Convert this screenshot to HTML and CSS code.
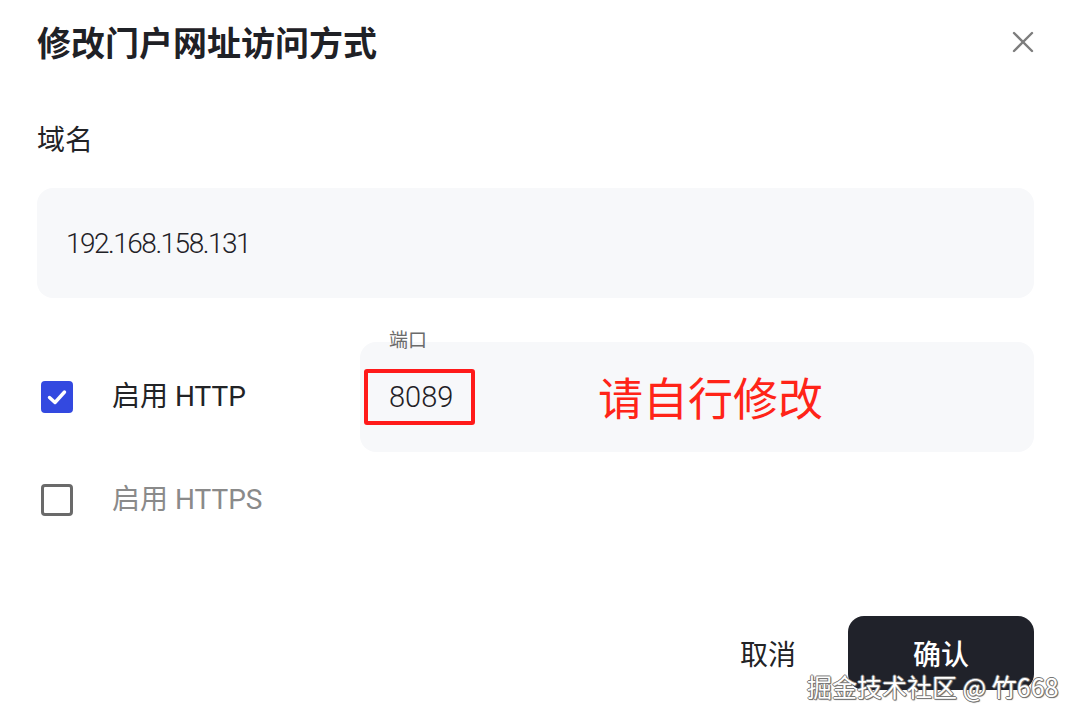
FILE: index.html
```html
<!DOCTYPE html>
<html lang="zh">
<head>
<meta charset="utf-8">
<title>修改门户网址访问方式</title>
<link rel="stylesheet" href="styles.css">
</head>
<body>
<div class="dialog">
  <div class="header">
    <h1 class="title">修改门户网址访问方式</h1>
    <button class="close" aria-label="关闭">
      <svg width="22" height="22" viewBox="0 0 22 22"><path d="M2 2L20 20M20 2L2 20" stroke="#7d7d7d" stroke-width="2.4" stroke-linecap="round"/></svg>
    </button>
  </div>

  <div class="field-label">域名</div>
  <div class="input domain">192.168.158.131</div>

  <div class="row http">
    <div class="check-group">
      <span class="checkbox checked">
        <svg width="24" height="24" viewBox="0 0 24 24"><path d="M4.5 12.5L10 17.5L19.5 7" fill="none" stroke="#fff" stroke-width="3.4" stroke-linecap="round" stroke-linejoin="round"/></svg>
      </span>
      <span class="check-text">启用 HTTP</span>
    </div>
    <div class="port-wrap">
      <span class="port-label">端口</span>
      <div class="input port">
        <span class="port-value">8089</span>
        <span class="note">请自行修改</span>
      </div>
    </div>
  </div>

  <div class="row https">
    <div class="check-group">
      <span class="checkbox"></span>
      <span class="check-text muted">启用 HTTPS</span>
    </div>
  </div>

  <div class="footer">
    <button class="btn-cancel">取消</button>
    <button class="btn-ok">确认</button>
  </div>

  <div class="watermark">掘金技术社区 @ 竹668</div>
</div>
</body>
</html>
```

FILE: styles.css
```css
html, body {
  margin: 0;
  padding: 0;
  background: #ffffff;
}
body {
  font-family: Roboto, "Noto Sans CJK SC", sans-serif;
  color: #222326;
}
.dialog {
  position: relative;
  width: 1080px;
  height: 721px;
  box-sizing: border-box;
  padding: 0 46px 0 37px;
  overflow: hidden;
}
.header {
  display: flex;
  align-items: center;
  justify-content: space-between;
  height: 48px;
  padding-top: 18px;
}
.title {
  margin: 0;
  font-family: "Noto Sans CJK SC", sans-serif;
  font-size: 34px;
  font-weight: 700;
  line-height: 48px;
  color: #1f2126;
}
.close {
  border: 0;
  background: none;
  padding: 0;
  margin-right: -10px;
  width: 42px;
  height: 42px;
  display: flex;
  align-items: center;
  justify-content: center;
}
.field-label {
  margin-top: 52px;
  font-family: "Noto Sans CJK SC", sans-serif;
  font-size: 28px;
  line-height: 40px;
  color: #222326;
}
.input {
  background: #f7f8fa;
  border-radius: 16px;
  box-sizing: border-box;
  display: flex;
  align-items: center;
}
.domain {
  margin-top: 30px;
  height: 110px;
  padding-left: 29px;
  font-family: Roboto, sans-serif;
  font-weight: 300;
  font-size: 28px;
  letter-spacing: -1.5px;
  color: #1f2126;
}
.row {
  display: flex;
  align-items: center;
}
.http {
  margin-top: 44px;
}
.check-group {
  display: flex;
  align-items: center;
  width: 323px;
  padding-left: 4px;
  box-sizing: border-box;
}
.checkbox {
  width: 32px;
  height: 32px;
  box-sizing: border-box;
  border: 3px solid #6a6a6a;
  border-radius: 4px;
  display: inline-flex;
  align-items: center;
  justify-content: center;
  flex: none;
}
.checkbox.checked {
  background: #3349e0;
  border-color: #3349e0;
}
.check-text {
  margin-left: 39px;
  font-family: Roboto, "Noto Sans CJK SC", sans-serif;
  font-size: 28px;
  line-height: 40px;
  color: #222326;
}
.check-text.muted {
  color: #8a8a8a;
}
.port-wrap {
  position: relative;
  flex: 1;
}
.port-label {
  position: absolute;
  left: 29px;
  top: -15px;
  font-family: "Noto Sans CJK SC", sans-serif;
  font-size: 19px;
  line-height: 24px;
  color: #6b6b6b;
}
.port {
  height: 110px;
  padding-left: 4px;
}
.port-value {
  display: inline-flex;
  align-items: center;
  box-sizing: border-box;
  width: 111px;
  height: 56px;
  padding-left: 21px;
  border: 4px solid #ff1a1a;
  border-radius: 3px;
  font-family: Roboto, sans-serif;
  font-weight: 300;
  font-size: 29px;
  color: #1f2126;
}
.note {
  margin-left: 123px;
  font-family: "Noto Sans CJK SC", sans-serif;
  font-size: 45px;
  line-height: 56px;
  color: #ff2418;
}
.https {
  margin-top: 28px;
}
.footer {
  display: flex;
  justify-content: flex-end;
  align-items: center;
  margin-top: 96px;
}
.btn-cancel {
  border: 0;
  background: none;
  padding: 0;
  font-family: "Noto Sans CJK SC", sans-serif;
  font-size: 28px;
  color: #222326;
  margin-right: 52px;
}
.btn-ok {
  border: 0;
  width: 186px;
  height: 74px;
  border-radius: 16px;
  background: #20222a;
  color: #ffffff;
  font-family: "Noto Sans CJK SC", sans-serif;
  font-size: 28px;
  font-weight: 500;
  padding-bottom: 2px;
}
.watermark {
  position: absolute;
  left: 807px;
  top: 668px;
  font-family: "Noto Sans CJK SC", sans-serif;
  font-size: 25px;
  line-height: 36px;
  color: #ffffff;
  white-space: nowrap;
  text-shadow: 1px 0 0 #777, -1px 0 0 #777, 0 1px 0 #777, 0 -1px 0 #777, 1px 1px 1px #555;
}
```
